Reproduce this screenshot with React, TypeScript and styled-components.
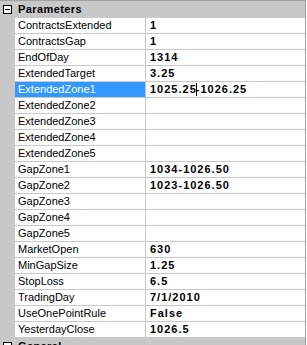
import React from 'react';
import styled, { createGlobalStyle } from 'styled-components';

const GlobalStyle = createGlobalStyle`
  html, body {
    margin: 0;
    padding: 0;
    background: #fff;
  }
  body {
    font-family: "Liberation Sans", Arial, sans-serif;
    font-size: 11px;
    color: #000;
  }
`;

const Frame = styled.div`
  width: 307px;
  height: 345px;
  overflow: hidden;
  background: #fff;
`;

const Grid = styled.div`
  width: 305px;
  border-top: 1px solid #a0a0a0;
  border-right: 1px solid #a0a0a0;
  background: #c8c8c8;
`;

const CategoryRow = styled.div`
  display: flex;
  align-items: center;
  height: 17px;
  background: #c8c8c8;
`;

const ExpandBox = styled.span`
  box-sizing: border-box;
  width: 9px;
  height: 9px;
  margin: 0 6px 1px 3px;
  border: 1px solid #000;
  background: #fff;
  position: relative;
  &::after {
    content: '';
    position: absolute;
    left: 1px;
    right: 1px;
    top: 3px;
    height: 1px;
    background: #000;
  }
`;

const CategoryTitle = styled.span`
  font-weight: bold;
  line-height: 17px;
  letter-spacing: 0.4px;
`;

const Row = styled.div`
  display: grid;
  grid-template-columns: 15px 131px 1fr;
  height: 16px;
`;

const Gutter = styled.div`
  background: #c8c8c8;
`;

const LabelCell = styled.div<{ $selected?: boolean }>`
  box-sizing: border-box;
  padding-left: 3px;
  line-height: 15px;
  border-right: 1px solid #c8c8c8;
  border-bottom: 1px solid #c8c8c8;
  background: ${(p) => (p.$selected ? '#3399ff' : '#fff')};
  color: ${(p) => (p.$selected ? '#fff' : '#000')};
  white-space: nowrap;
  overflow: hidden;
`;

const ValueCell = styled.div`
  box-sizing: border-box;
  padding-left: 4px;
  line-height: 15px;
  font-weight: bold;
  letter-spacing: 1px;
  background: #fff;
  border-bottom: 1px solid #c8c8c8;
  white-space: nowrap;
  overflow: hidden;
  display: flex;
  align-items: center;
`;

const Caret = styled.span`
  display: inline-block;
  width: 1px;
  height: 13px;
  background: #000;
  margin: 0 -1px 0 -1px;
`;

type Prop = { name: string; value?: string; selected?: boolean };

const parameters: Prop[] = [
  { name: 'ContractsExtended', value: '1' },
  { name: 'ContractsGap', value: '1' },
  { name: 'EndOfDay', value: '1314' },
  { name: 'ExtendedTarget', value: '3.25' },
  { name: 'ExtendedZone1', value: '1025.25|-1026.25', selected: true },
  { name: 'ExtendedZone2' },
  { name: 'ExtendedZone3' },
  { name: 'ExtendedZone4' },
  { name: 'ExtendedZone5' },
  { name: 'GapZone1', value: '1034-1026.50' },
  { name: 'GapZone2', value: '1023-1026.50' },
  { name: 'GapZone3' },
  { name: 'GapZone4' },
  { name: 'GapZone5' },
  { name: 'MarketOpen', value: '630' },
  { name: 'MinGapSize', value: '1.25' },
  { name: 'StopLoss', value: '6.5' },
  { name: 'TradingDay', value: '7/1/2010' },
  { name: 'UseOnePointRule', value: 'False' },
  { name: 'YesterdayClose', value: '1026.5' },
];

// a '|' in the value marks where the edit caret sits
const renderValue = (value?: string) => {
  if (!value) return null;
  const [before, after] = value.split('|');
  if (after === undefined) return value;
  return (
    <>
      {before}
      <Caret />
      {after}
    </>
  );
};

export default function App() {
  return (
    <Frame>
      <GlobalStyle />
      <Grid>
        <CategoryRow>
          <ExpandBox />
          <CategoryTitle>Parameters</CategoryTitle>
        </CategoryRow>
        {parameters.map((p) => (
          <Row key={p.name}>
            <Gutter />
            <LabelCell $selected={p.selected}>{p.name}</LabelCell>
            <ValueCell>{renderValue(p.value)}</ValueCell>
          </Row>
        ))}
        <CategoryRow>
          <ExpandBox />
          <CategoryTitle>General</CategoryTitle>
        </CategoryRow>
      </Grid>
    </Frame>
  );
}
